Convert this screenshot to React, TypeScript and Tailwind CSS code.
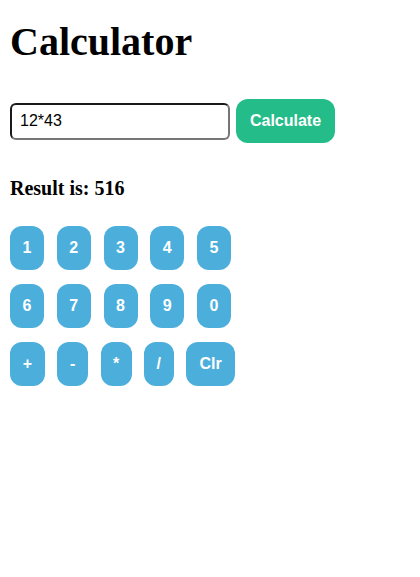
import React from "react";

const serif = { fontFamily: '"Liberation Serif", "Times New Roman", serif' };
const sans = { fontFamily: '"Liberation Sans", Arial, sans-serif' };

function Key({ label, w }: { label: string; w: string }) {
  return (
    <button
      className={`${w} h-[44px] shrink-0 rounded-[12px] bg-[#4caedb] text-white font-bold text-[16px] leading-[18px] text-center`}
      style={sans}
    >
      {label}
    </button>
  );
}

export default function App() {
  return (
    <div className="bg-white min-h-[577px] w-[420px] px-[10px]" style={serif}>
      <h1 className="text-[40px] font-bold leading-[46px] pt-[19px] text-black">Calculator</h1>
      <div className="flex items-center gap-[6px] mt-[34px]">
        <input
          readOnly
          value="12*43"
          className="w-[220px] h-[37px] rounded-[6px] border-2 border-t-[#1a1a1a] border-l-[#1a1a1a] border-r-[#767676] border-b-[#767676] px-[8px] text-[16px] text-black outline-none"
          style={sans}
        />
        <button
          className="w-[99px] h-[44px] rounded-[12px] bg-[#24bc89] text-white font-bold text-[16px]"
          style={sans}
        >
          Calculate
        </button>
      </div>
      <div className="text-[20px] font-bold leading-[23px] mt-[34px] text-black">Result is: 516</div>
      <div className="flex flex-col gap-[14px] mt-[26px]">
        <div className="flex gap-[12.75px]">
          {["1", "2", "3", "4", "5"].map((k) => (
            <Key key={k} label={k} w="w-[34px]" />
          ))}
        </div>
        <div className="flex gap-[12.75px]">
          {["6", "7", "8", "9", "0"].map((k) => (
            <Key key={k} label={k} w="w-[34px]" />
          ))}
        </div>
        <div className="flex gap-[12.25px]">
          <Key label="+" w="w-[35px]" />
          <Key label="-" w="w-[31px]" />
          <Key label="*" w="w-[31px]" />
          <Key label="/" w="w-[30px]" />
          <Key label="Clr" w="w-[49px]" />
        </div>
      </div>
    </div>
  );
}
